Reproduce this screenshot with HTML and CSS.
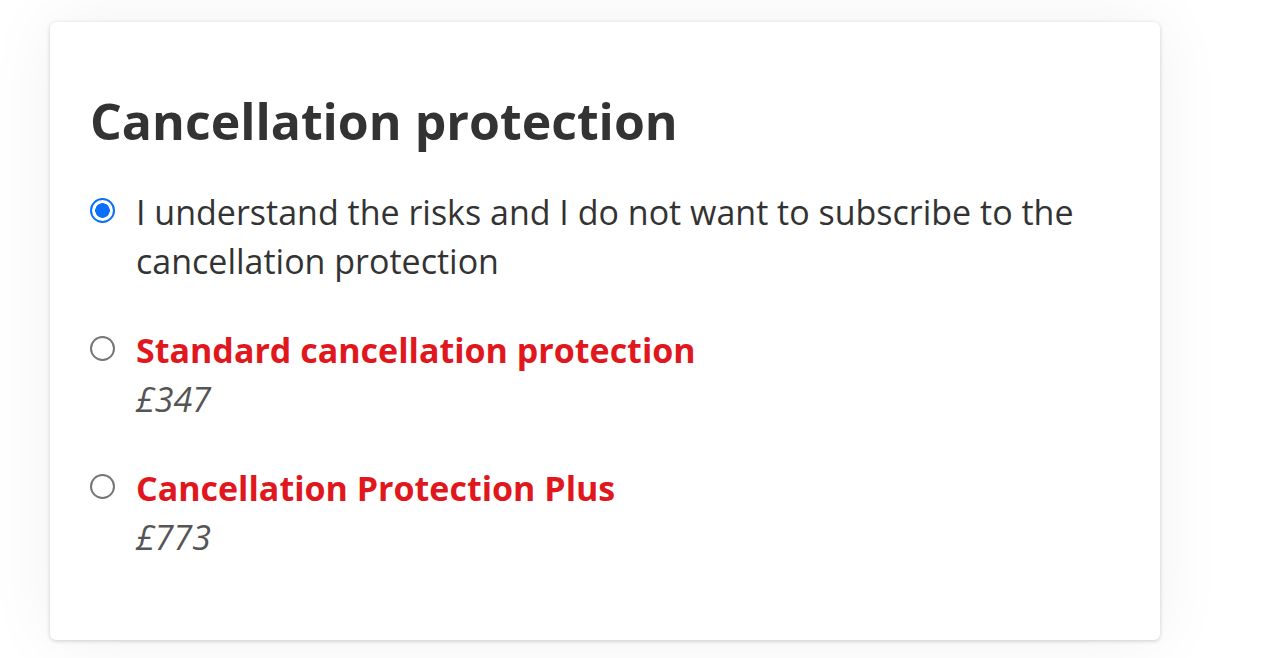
FILE: index.html
```html
<!DOCTYPE html>
<html lang="en">
<head>
    <meta charset="UTF-8">
    <title>Cancellation protection</title>
    <link rel="stylesheet" href="styles.css">
</head>
<body>
    <div class="page">
        <section class="card">
            <h2 class="card-title">Cancellation protection</h2>

            <label class="option">
                <input type="radio" name="protection" class="option-radio" checked>
                <span class="option-body">
                    <span class="option-text">I understand the risks and I do not want to subscribe to the cancellation protection</span>
                </span>
            </label>

            <label class="option">
                <input type="radio" name="protection" class="option-radio">
                <span class="option-body">
                    <span class="option-name">Standard cancellation protection</span>
                    <span class="option-price">£347</span>
                </span>
            </label>

            <label class="option">
                <input type="radio" name="protection" class="option-radio">
                <span class="option-body">
                    <span class="option-name">Cancellation Protection Plus</span>
                    <span class="option-price">£773</span>
                </span>
            </label>
        </section>
    </div>
</body>
</html>
```

FILE: styles.css
```css
/* Base styles */
body {
    font-family: "Open Sans", Arial, sans-serif;
    margin: 0;
    padding: 0;
    background-color: #ffffff;
    color: #333333;
}

.page {
    padding: 22px 104px 18px 50px;
}

.card {
    background: white;
    border-radius: 6px;
    box-shadow: 0 1px 4px rgba(0,0,0,0.18), 0 0 70px rgba(0,0,0,0.06);
    padding: 69px 40px 80px 40px;
    height: 618px;
    box-sizing: border-box;
}

.card-title {
    font-size: 50px;
    font-weight: 700;
    line-height: 60px;
    margin: 0 0 37px 0;
    color: #333333;
}

.option {
    display: flex;
    align-items: flex-start;
    gap: 21px;
    margin-bottom: 40px;
    cursor: pointer;
}

.option-radio {
    appearance: none;
    -webkit-appearance: none;
    flex: none;
    width: 25px;
    height: 25px;
    margin: 10px 0 0 0;
    border: 2px solid #767676;
    border-radius: 50%;
    background: white;
    box-sizing: border-box;
}

.option-radio:checked {
    border-color: #0b6efd;
    background: radial-gradient(circle, #0b6efd 0 7px, white 7.5px);
}

.option-body {
    display: flex;
    flex-direction: column;
    font-size: 34px;
    line-height: 49px;
}

.option-name {
    color: #e0181e;
    font-weight: 700;
}

.option-price {
    color: #555555;
    font-style: italic;
}
```
